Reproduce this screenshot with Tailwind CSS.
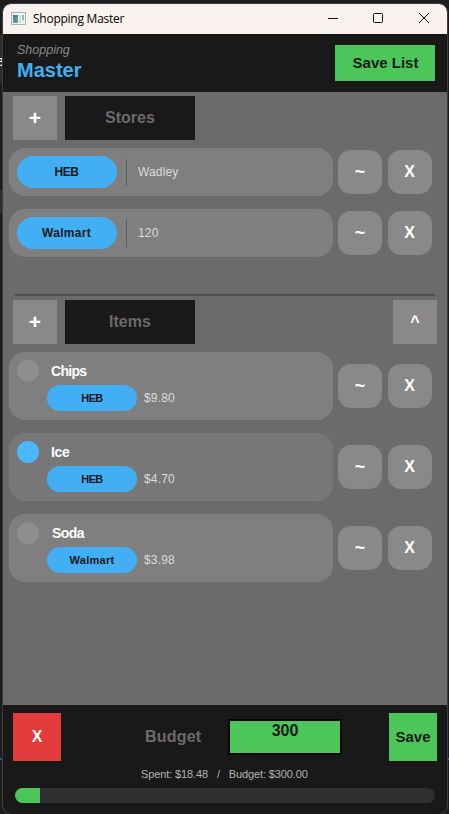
<!DOCTYPE html>
<html lang="en">
<head>
    <meta charset="UTF-8">
    <meta name="viewport" content="width=device-width, initial-scale=1.0">
    <title>Shopping Master</title>
    <script src="https://cdn.jsdelivr.net/npm/@tailwindcss/browser@4"></script>
</head>
<body class="relative h-[814px] w-[449px] overflow-hidden bg-[#1c1c1c] pt-[4px] pl-[3px] font-['Liberation_Sans',Arial,sans-serif]">
    <!-- Desktop behind the window -->
    <div class="absolute top-[35px] left-0 h-[48px] w-[3px] overflow-hidden bg-[#2d2d2d] pt-[18px]">
        <span class="-ml-[4px] block text-[14px] leading-[16px] text-white">e</span>
    </div>
    <div class="absolute top-[190px] left-0 h-[23px] w-[3px] bg-[#303030]"></div>
    <div class="absolute top-[758px] left-0 h-[2px] w-full bg-[#5648a0]"></div>

    <!-- Window -->
    <main class="relative flex h-[810px] w-[444px] flex-col overflow-hidden rounded-[8px] bg-[#6b6b6b] outline outline-[#3c3c3c]">
        <!-- Title bar -->
        <div class="flex h-[30px] shrink-0 items-center bg-[#f9f1ed] pl-[8px] text-black">
            <svg class="-mt-[2px] h-[13px] w-[15px]" viewBox="0 0 15 13">
                <defs>
                    <linearGradient id="pane" x1="0" y1="0" x2="1" y2="1">
                        <stop offset="0" stop-color="#3f72b0" />
                        <stop offset="1" stop-color="#67b17c" />
                    </linearGradient>
                </defs>
                <rect x=".5" y=".5" width="14" height="12" fill="#f4f6f7" stroke="#a9b0b7" />
                <rect x="2" y="3" width="5" height="8" fill="url(#pane)" />
                <rect x="8" y="3" width="2" height="8" fill="#d5dadd" />
                <rect x="11" y="3" width="2" height="5" fill="#8cbfb5" />
                <rect x="11" y="8" width="2" height="3" fill="#dfe5e6" />
            </svg>
            <span class="ml-[7px] flex-1 font-['Open_Sans',sans-serif] text-[12px] tracking-[-0.25px]">Shopping Master</span>
            <svg class="mr-[17px] h-[12px] w-[102px]" viewBox="0 0 102 12" fill="none" stroke="#111">
                <path d="M0 5.5h10" />
                <rect x="45.5" y=".5" width="9" height="9" rx="1" />
                <path d="M91 0l10 10M101 0L91 10" />
            </svg>
        </div>

        <!-- Header -->
        <header class="flex h-[58px] shrink-0 items-center justify-between bg-[#191919] pr-[12px] pl-[14px]">
            <div class="-mt-[2px]">
                <p class="text-[12.5px] leading-[16px] text-[#8a8a8a] italic">Shopping</p>
                <h1 class="text-[20px] leading-[24px] font-bold text-[#42aff5]">Master</h1>
            </div>
            <button class="h-[36px] w-[100px] bg-[#4dc659] pl-px text-[15px] font-bold text-[#191919]">Save List</button>
        </header>

        <!-- Stores -->
        <section class="flex h-[202px] shrink-0 flex-col pt-[4px]">
            <div class="flex gap-[8px] pl-[10px]">
                <button class="flex size-[44px] items-center justify-center bg-[#898989] text-[21px] font-bold text-white">+</button>
                <h2 class="flex w-[130px] items-center justify-center bg-[#191919] text-[16px] font-bold text-[#6b6b6b]">Stores</h2>
            </div>
            <div class="mt-[8px] flex flex-col gap-[13px] pl-[6px]">
                <div class="flex items-center">
                    <div class="flex h-[48px] w-[324px] items-center rounded-[16px] bg-[#7f7f7f] pl-[8px]">
                        <span class="flex h-[32px] w-[100px] items-center justify-center rounded-full bg-[#42aff5] pr-px text-[12px] font-bold tracking-[-0.4px] text-[#191919]">HEB</span>
                        <span class="ml-[9px] h-[27px] w-px bg-[#5c5c5c]"></span>
                        <span class="ml-[11px] text-[12px] tracking-[0.15px] text-[#dcdcdc]">Wadley</span>
                    </div>
                    <button class="ml-[5px] size-[44px] rounded-[13px] bg-[#898989] text-[18px] font-bold text-white">~</button>
                    <button class="ml-[6px] size-[44px] rounded-[13px] bg-[#898989] pr-px text-[16px] font-bold text-white">X</button>
                </div>
                <div class="flex items-center">
                    <div class="flex h-[48px] w-[324px] items-center rounded-[16px] bg-[#7f7f7f] pl-[8px]">
                        <span class="flex h-[32px] w-[100px] items-center justify-center rounded-full bg-[#42aff5] pr-px text-[12px] font-bold tracking-[0.3px] text-[#191919]">Walmart</span>
                        <span class="ml-[9px] h-[27px] w-px bg-[#5c5c5c]"></span>
                        <span class="ml-[11px] text-[12px] tracking-[0.15px] text-[#dcdcdc]">120</span>
                    </div>
                    <button class="ml-[5px] size-[44px] rounded-[13px] bg-[#898989] text-[18px] font-bold text-white">~</button>
                    <button class="ml-[6px] size-[44px] rounded-[13px] bg-[#898989] pr-px text-[16px] font-bold text-white">X</button>
                </div>
            </div>
        </section>

        <hr class="mx-[12px] h-[2px] shrink-0 border-0 bg-[#505050]">

        <!-- Items -->
        <section class="flex-1 pt-[4px]">
            <div class="flex gap-[8px] pr-[10px] pl-[10px]">
                <button class="flex size-[44px] items-center justify-center bg-[#898989] text-[21px] font-bold text-white">+</button>
                <h2 class="flex w-[130px] items-center justify-center bg-[#191919] text-[16px] font-bold text-[#6b6b6b]">Items</h2>
                <button class="ml-auto size-[44px] bg-[#898989] text-[16px] font-bold text-white">^</button>
            </div>
            <div class="mt-[8px] flex flex-col gap-[13px] pl-[6px]">
                <div class="flex items-center">
                    <div class="h-[68px] w-[324px] rounded-[16px] bg-[#7f7f7f] pt-[8px] pl-[8px]">
                        <div class="flex h-[22px] items-center gap-[12px]">
                            <span class="size-[22px] rounded-full bg-[#8f8f8f]"></span>
                            <span class="text-[14px] font-bold tracking-[-0.7px] text-white">Chips</span>
                        </div>
                        <div class="mt-[3px] flex items-center gap-[7px] pl-[30px]">
                            <span class="flex h-[26px] w-[90px] items-center justify-center rounded-full bg-[#42aff5] text-[11px] font-bold tracking-[-0.6px] text-[#191919]">HEB</span>
                            <span class="text-[12px] tracking-[0.15px] text-[#dcdcdc]">$9.80</span>
                        </div>
                    </div>
                    <button class="ml-[5px] size-[44px] rounded-[13px] bg-[#898989] text-[18px] font-bold text-white">~</button>
                    <button class="ml-[6px] size-[44px] rounded-[13px] bg-[#898989] pr-px text-[16px] font-bold text-white">X</button>
                </div>
                <div class="flex items-center">
                    <div class="h-[68px] w-[324px] rounded-[16px] bg-[#777777] pt-[8px] pl-[8px]">
                        <div class="flex h-[22px] items-center gap-[12px]">
                            <span class="size-[22px] rounded-full bg-[#4db6fa]"></span>
                            <span class="text-[14px] font-bold tracking-[-0.3px] text-white">Ice</span>
                        </div>
                        <div class="mt-[3px] flex items-center gap-[7px] pl-[30px]">
                            <span class="flex h-[26px] w-[90px] items-center justify-center rounded-full bg-[#42aff5] text-[11px] font-bold tracking-[-0.6px] text-[#191919]">HEB</span>
                            <span class="text-[12px] tracking-[0.15px] text-[#dcdcdc]">$4.70</span>
                        </div>
                    </div>
                    <button class="ml-[5px] size-[44px] rounded-[13px] bg-[#898989] text-[18px] font-bold text-white">~</button>
                    <button class="ml-[6px] size-[44px] rounded-[13px] bg-[#898989] pr-px text-[16px] font-bold text-white">X</button>
                </div>
                <div class="flex items-center">
                    <div class="h-[68px] w-[324px] rounded-[16px] bg-[#7f7f7f] pt-[8px] pl-[8px]">
                        <div class="flex h-[22px] items-center gap-[12px]">
                            <span class="size-[22px] rounded-full bg-[#8f8f8f]"></span>
                            <span class="pl-px text-[14px] font-bold tracking-[-0.6px] text-white">Soda</span>
                        </div>
                        <div class="mt-[3px] flex items-center gap-[7px] pl-[30px]">
                            <span class="flex h-[26px] w-[90px] items-center justify-center rounded-full bg-[#42aff5] text-[11px] font-bold tracking-[0.3px] text-[#191919]">Walmart</span>
                            <span class="text-[12px] tracking-[0.15px] text-[#dcdcdc]">$3.98</span>
                        </div>
                    </div>
                    <button class="ml-[5px] size-[44px] rounded-[13px] bg-[#898989] text-[18px] font-bold text-white">~</button>
                    <button class="ml-[6px] size-[44px] rounded-[13px] bg-[#898989] pr-px text-[16px] font-bold text-white">X</button>
                </div>
            </div>
        </section>

        <!-- Budget -->
        <footer class="h-[109px] shrink-0 bg-[#191919] px-[10px] pt-[8px]">
            <div class="flex items-center">
                <button class="size-[48px] bg-[#e23c3c] text-[16px] font-bold text-white">X</button>
                <span class="ml-[84px] w-[83px] text-[16px] font-bold tracking-[0.2px] text-[#6b6b6b]">Budget</span>
                <div class="h-[36px] w-[114px] border-2 border-black bg-[#4dc659] text-center text-[16px] leading-[19px] font-bold text-[#191919]">300</div>
                <button class="ml-auto size-[48px] bg-[#4dc659] text-[15px] font-bold text-[#191919]">Save</button>
            </div>
            <p class="mt-[5px] pl-[128px] text-[11px] leading-[16px] tracking-[-0.11px] whitespace-pre text-[#b4b4b4]">Spent: $18.48   /   Budget: $300.00</p>
            <div class="mx-[2px] mt-[6px] h-[15px] overflow-hidden rounded-full bg-[#303030]">
                <div class="h-full bg-[#4dc659]" style="width: 25px"></div>
            </div>
        </footer>
    </main>
</body>
</html>
